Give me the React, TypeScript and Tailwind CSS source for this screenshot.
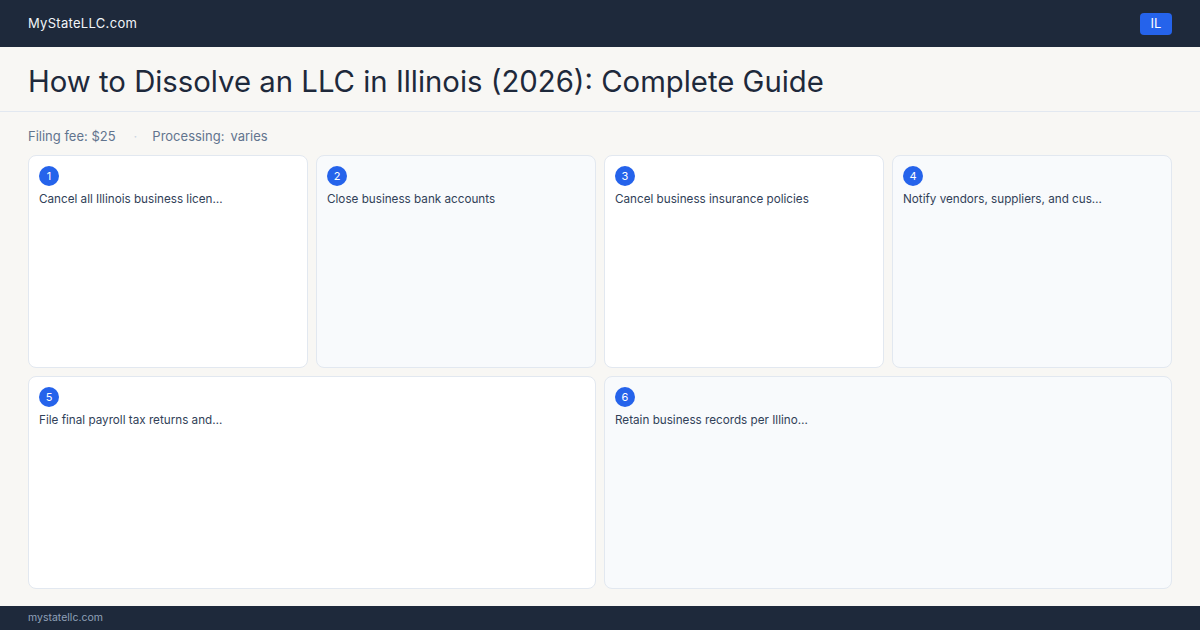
const steps = [
  { n: 1, text: "Cancel all Illinois business licen…", alt: false },
  { n: 2, text: "Close business bank accounts", alt: true },
  { n: 3, text: "Cancel business insurance policies", alt: false },
  { n: 4, text: "Notify vendors, suppliers, and cus…", alt: true },
  { n: 5, text: "File final payroll tax returns and…", alt: false, wide: true },
  { n: 6, text: "Retain business records per Illino…", alt: true, wide: true },
];

export default function App() {
  return (
    <div className="flex h-[630px] w-[1200px] flex-col bg-[#f8f7f4] font-['Inter',sans-serif] text-slate-800">
      <header className="flex h-[47px] shrink-0 items-center justify-between bg-[#1e293b] px-7">
        <span className="text-[13px] tracking-[0.3px] text-slate-100">MyStateLLC.com</span>
        <span className="flex h-[22px] w-[32px] items-center justify-center rounded-[4px] bg-[#2563eb] text-[13px] text-white">
          IL
        </span>
      </header>

      <div className="flex h-[65px] shrink-0 items-center border-b border-slate-200 px-7 pt-[5px]">
        <h1 className="text-[29.3px] font-normal leading-none text-[#1e293b]">
          How to Dissolve an LLC in Illinois (2026): Complete Guide
        </h1>
      </div>

      <main className="flex min-h-0 flex-1 flex-col px-7 pt-4 pb-[17px]">
        <div className="flex h-4 items-center text-[13px] leading-4 text-slate-500">
          <span>Filing fee: $25</span>
          <span className="ml-[18px] mr-[15px] text-slate-300">·</span>
          <span>Processing:</span>
          <span className="ml-[6px]">varies</span>
        </div>

        <div className="mt-[11px] grid min-h-0 flex-1 grid-cols-4 grid-rows-2 gap-2">
          {steps.map((s) => (
            <div
              key={s.n}
              className={`rounded-lg border border-slate-200 p-[10px] ${s.wide ? "col-span-2" : ""} ${
                s.alt ? "bg-slate-50" : "bg-white"
              }`}
            >
              <div className="flex h-5 w-5 items-center justify-center rounded-full bg-[#2563eb] text-[11px] text-white">
                {s.n}
              </div>
              <p className="mt-[5px] text-[11.7px] leading-4 text-slate-700">{s.text}</p>
            </div>
          ))}
        </div>
      </main>

      <footer className="flex h-6 shrink-0 items-center bg-[#1e293b] px-7">
        <span className="text-[10.5px] text-slate-400">mystatellc.com</span>
      </footer>
    </div>
  );
}
